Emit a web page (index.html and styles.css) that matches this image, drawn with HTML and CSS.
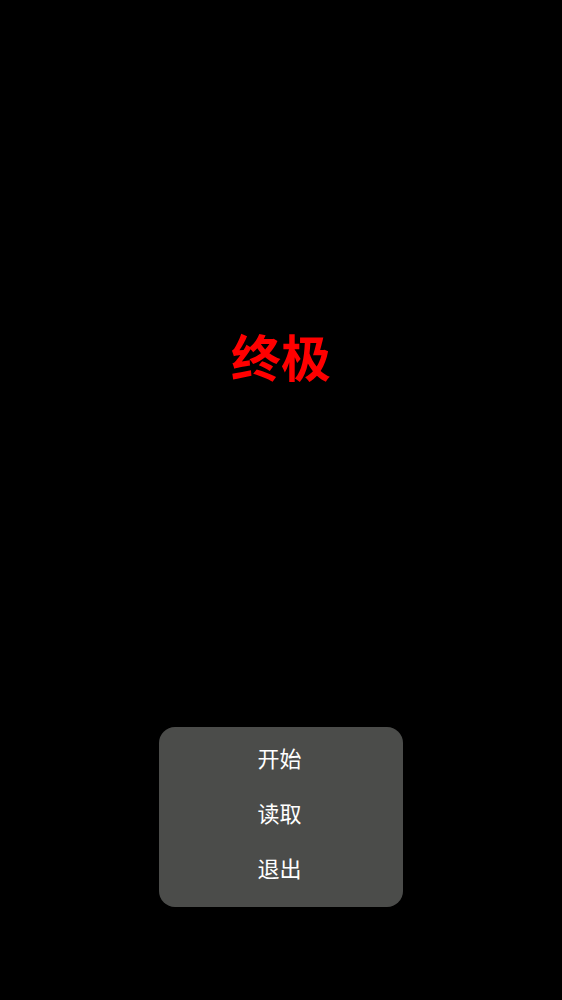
FILE: index.html
```html
<!DOCTYPE html>
<html lang="zh">
<head>
<meta charset="utf-8">
<link rel="stylesheet" href="styles.css">
</head>
<body>
<div class="screen">
  <h1 class="title">终极</h1>
  <div class="menu">
    <div class="item">开始</div>
    <div class="item">读取</div>
    <div class="item">退出</div>
  </div>
</div>
</body>
</html>
```
FILE: styles.css
```css
html, body {
  margin: 0;
  padding: 0;
  background: #000;
}
.screen {
  width: 562px;
  height: 1000px;
  display: flex;
  flex-direction: column;
  align-items: center;
  font-family: "Noto Sans CJK SC", "Noto Sans", sans-serif;
}
.title {
  margin: 330px 0 0 0;
  font-size: 50px;
  line-height: 50px;
  font-weight: 700;
  color: #ff0000;
}
.menu {
  margin-top: 347px;
  width: 244px;
  height: 180px;
  box-sizing: border-box;
  padding: 3px 3px 12px 0;
  background: #4b4c4a;
  border-radius: 16px;
  display: flex;
  flex-direction: column;
}
.item {
  height: 55px;
  line-height: 55px;
  text-align: center;
  color: #fff;
  font-size: 22px;
}
```
